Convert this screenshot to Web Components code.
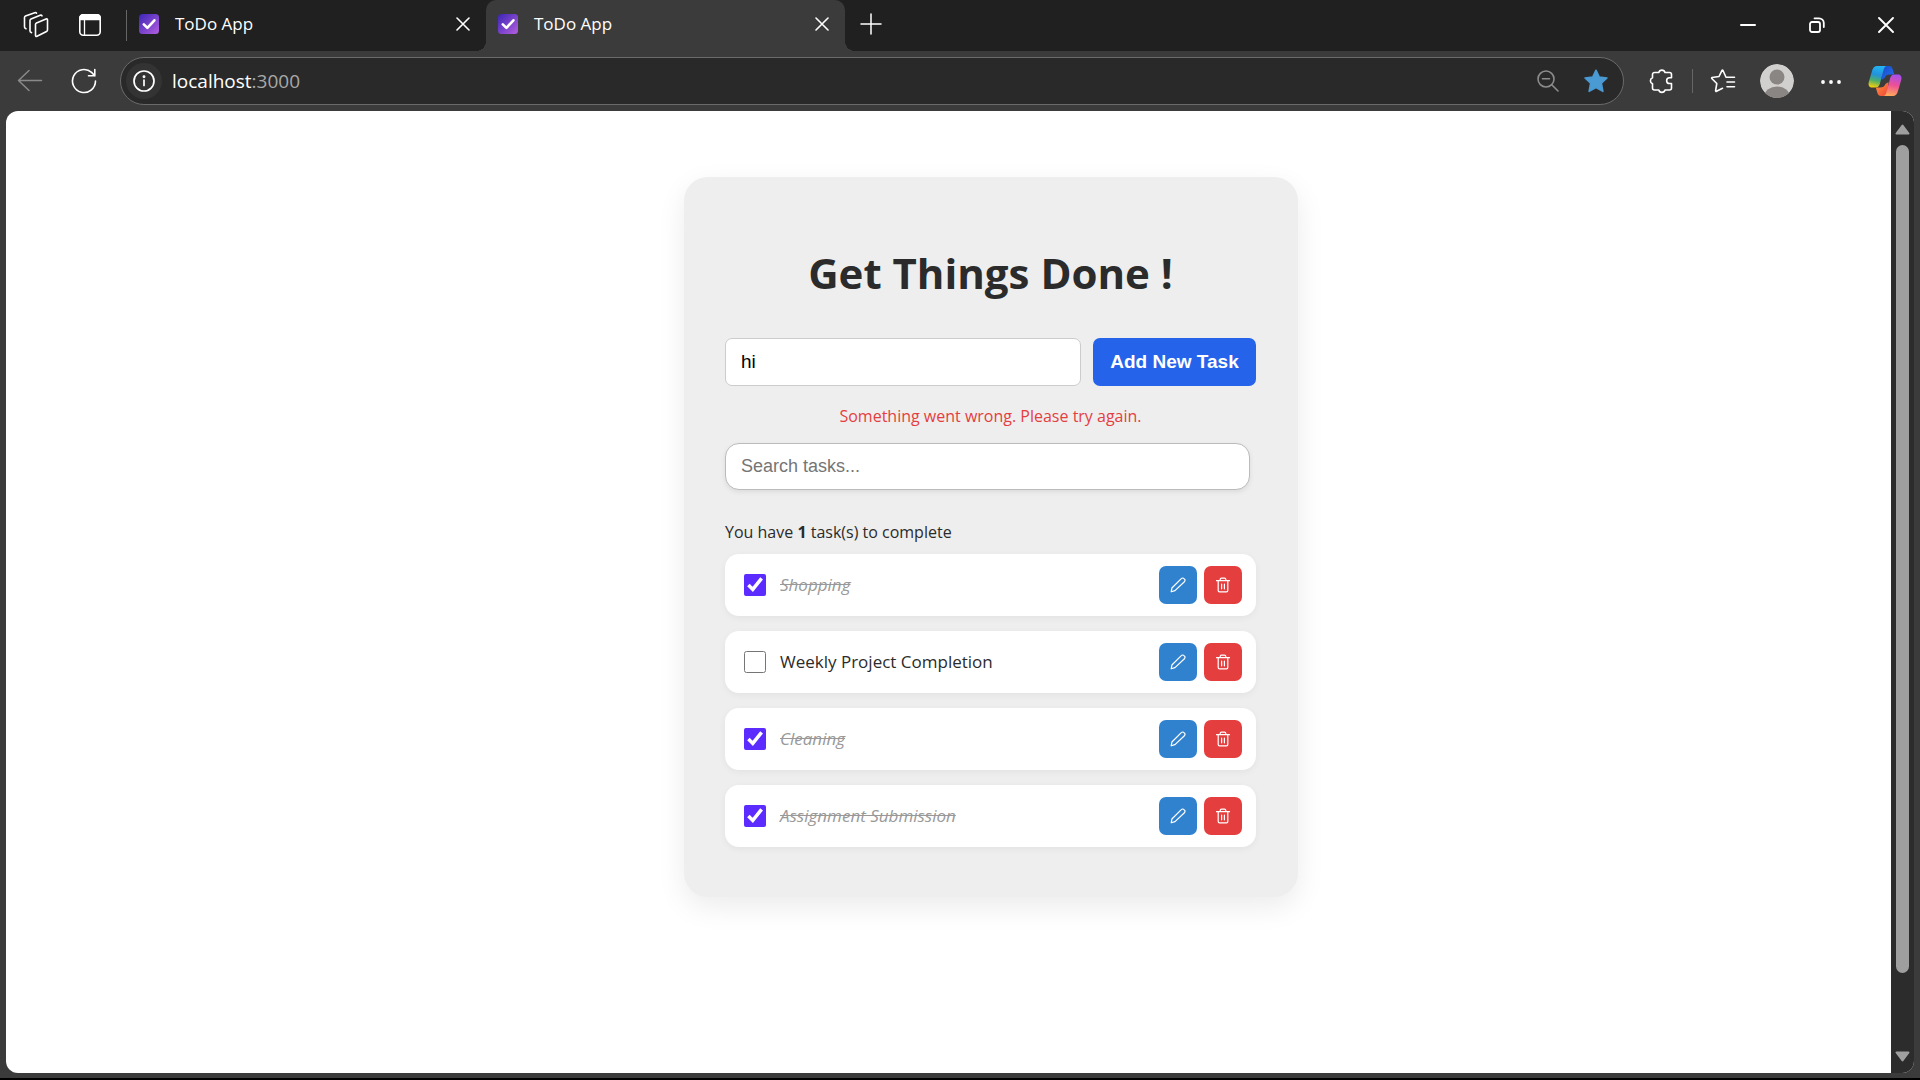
<!DOCTYPE html>
<html lang="en">
<head>
<meta charset="utf-8">
<title>ToDo App</title>
<style>
  html, body { margin: 0; height: 100%; }
  body { font-family: "Open Sans", "Noto Sans", sans-serif; background: #000; overflow: hidden; }
</style>
</head>
<body>
<browser-window>
  <browser-tab slot="tabs">ToDo App</browser-tab>
  <browser-tab slot="tabs" active>ToDo App</browser-tab>
  <address-bar slot="address" host="localhost" port=":3000"></address-bar>
  <todo-card>
    <task-item done>Shopping</task-item>
    <task-item>Weekly Project Completion</task-item>
    <task-item done>Cleaning</task-item>
    <task-item done>Assignment Submission</task-item>
  </todo-card>
</browser-window>

<script>
const reset = `
  :host, *, *::before, *::after { box-sizing: border-box; }
  button { margin: 0; padding: 0; border: 0; background: none; color: inherit; font: inherit;
           display: grid; place-items: center; cursor: pointer; }
  svg { display: block; fill: none; stroke: currentColor; stroke-linecap: round; stroke-linejoin: round; }
`;

class BaseElement extends HTMLElement {
  constructor() {
    super();
    this.attachShadow({ mode: 'open' });
  }
  connectedCallback() {
    this.shadowRoot.innerHTML = `<style>${reset}${this.styles()}</style>${this.markup()}`;
  }
}

customElements.define('browser-window', class extends BaseElement {
  styles() { return `
    :host { display: flex; flex-direction: column; height: calc(100vh - 2px); background: #3b3b3b; color: #fff; }
    .strip { display: flex; align-items: stretch; height: 51px; background: #202020; }
    .left { display: flex; align-items: center; padding-left: 9px; width: 127px; }
    .left button { width: 54px; height: 48px; padding-bottom: 2px; }
    .left i { width: 1px; height: 31px; background: #666; margin-left: auto; }
    .tabs { display: flex; flex: 0 1 718px; }
    .new { width: 52px; padding-bottom: 4px; }
    .win { display: flex; margin-left: auto; }
    .win button { width: 69px; padding-bottom: 2px; }
    .bar { display: flex; align-items: center; height: 60px; padding: 0 11px 0 6px; gap: 6px; }
    .bar button { width: 48px; height: 48px; }
    .bar i { width: 1px; height: 24px; background: #666; }
    .back { color: #8a8a8a; }
    slot[name=address]::slotted(*) { flex: 1; margin: 0 8px 0 6px; }
    .view { flex: 1; min-height: 0; display: flex; margin: 0 6px 5px; border-radius: 12px; overflow: hidden; background: #fff; }
    main { flex: 1; padding: 66px 0 0 85px; overflow: hidden; }
    .scroll { display: flex; flex-direction: column; align-items: center; justify-content: space-between; width: 23px;
              padding: 13px 0 11px; background: #2c2c2c; color: #9f9f9f; }
    .thumb { flex: 1; width: 13px; margin: 10px 0 78px; border-radius: 7px; background: #9f9f9f; }
  `; }
  markup() { return `
    <header class="strip">
      <div class="left">
        <button aria-label="Workspaces"><svg width="28" height="28" viewBox="0 0 28 28" stroke-width="1.6">
          <path d="M14.500 12L24 8q1.500-.5 1.500 1v10q0 1-1 1.500L15 25.200q-1.500.6-1.500-1V13.500q0-1 1-1.500z"/>
          <path d="M20 4.800q-.5-1-1.800-.6L9 8q-1 .5-1 1.500V20q0 1.300 1.500 1.600"/>
          <path d="M14.500 2.200q-.5-.8-1.800-.4L3.500 5q-1 .5-1 1.500V16q0 1.300 1.500 1.800"/>
        </svg></button>
        <button aria-label="Tab actions"><svg width="24" height="24" viewBox="0 0 24 24" stroke-width="1.600">
          <rect x="1.800" y="1.800" width="20.400" height="20.400" rx="3.500"/>
          <path d="M1.800 6.500V5a3.200 3.200 0 0 1 3.200-3.200h14A3.200 3.200 0 0 1 22.200 5v1.500z" fill="currentColor"/>
          <path d="M6.500 7v15" stroke-width="1.300"/>
        </svg></button>
        <i></i>
      </div>
      <div class="tabs" role="tablist"><slot name="tabs"></slot></div>
      <button class="new" aria-label="New tab"><svg width="22" height="22" viewBox="0 0 22 22" stroke-width="1.500"><path d="M11 1v20M1 11h20"/></svg></button>
      <div class="win">
        <button aria-label="Minimize"><svg width="16" height="16" viewBox="0 0 16 16" stroke-width="2" stroke-linecap="butt"><path d="M1 8h14"/></svg></button>
        <button aria-label="Restore"><svg width="16" height="16" viewBox="0 0 16 16" stroke-width="1.800"><rect x="1" y="5" width="10" height="10" rx="2"/><path d="M5.500 1.300H10A4.800 4.800 0 0 1 14.800 6v4"/></svg></button>
        <button aria-label="Close"><svg width="16" height="16" viewBox="0 0 16 16" stroke-width="1.900"><path d="M1 1l14 14M15 1L1 15"/></svg></button>
      </div>
    </header>
    <nav class="bar">
      <button class="back" aria-label="Back"><svg width="26" height="26" viewBox="0 0 26 26" stroke-width="1.500"><path d="M24.500 12.500H1.500M12 2.500L1.500 12.500 12 22.500"/></svg></button>
      <button aria-label="Refresh"><svg width="26" height="26" viewBox="0 0 26 26" stroke-width="1.600"><path d="M24.500 13A11.500 11.500 0 1 1 20.600 4.400L23.800 7.800M23.800 1.500v6.300h-6.300"/></svg></button>
      <slot name="address"></slot>
      <button aria-label="Extensions"><svg width="26" height="26" viewBox="0 0 26 26" stroke-width="1.600"><path d="M5.500 4.500h4.300a3.200 3.200 0 0 1 6.200 0h4.500a2 2 0 0 1 2 2v3.300h-2a2.700 2.700 0 0 0 0 5.700h2v4.500a2 2 0 0 1-2 2H16a3.200 3.200 0 0 1-6.200 0H5.500a2 2 0 0 1-2-2v-4.200a3.200 3.200 0 0 1 0-6V6.500a2 2 0 0 1 2-2z"/></svg></button>
      <i></i>
      <button aria-label="Favorites"><svg width="26" height="26" viewBox="0 0 26 26" stroke-width="1.600"><path d="M24.500 9.300H16L12.900 2.300a.5.500 0 0 0-.9 0L9 8.500l-6.900 1a.6.600 0 0 0-.3 1l5 5-1.200 7.200a.6.600 0 0 0 .9.600l6-3M17 14h7.500M17 18.700h7.500"/></svg></button>
      <button aria-label="Profile"><svg width="34" height="34" viewBox="0 0 34 34" stroke="none">
        <defs><clipPath id="a"><circle cx="17" cy="17" r="17"/></clipPath></defs>
        <g clip-path="url(#a)" stroke="none"><circle cx="17" cy="17" r="17" fill="#d2d0ce"/><circle cx="17" cy="13" r="7.500" fill="#8a8684"/><ellipse cx="17" cy="32" rx="12.500" ry="9.500" fill="#8a8684"/></g>
      </svg></button>
      <button aria-label="Settings and more"><svg width="20" height="6" viewBox="0 0 20 6"><g fill="#fff" stroke="none"><circle cx="2" cy="4" r="1.900"/><circle cx="10" cy="4" r="1.900"/><circle cx="18" cy="4" r="1.900"/></g></svg></button>
      <button aria-label="Copilot"><svg width="34" height="32" viewBox="0 0 34 32">
        <defs>
          <linearGradient id="b" x1=".5" y1="0" x2=".3" y2="1"><stop offset="0" stop-color="#22b4f2"/><stop offset=".4" stop-color="#2292dc"/><stop offset=".68" stop-color="#4fae68"/><stop offset="1" stop-color="#f6d00c"/></linearGradient>
          <linearGradient id="c" x1=".3" y1="1" x2=".5" y2="0"><stop offset="0" stop-color="#a44ef0"/><stop offset=".5" stop-color="#ee5095"/><stop offset="1" stop-color="#ffa85c"/></linearGradient>
          <linearGradient id="d" x1="0" y1="0" x2="1" y2="1"><stop offset="0" stop-color="#1b48c8"/><stop offset="1" stop-color="#2374ee"/></linearGradient>
          <linearGradient id="e" x1="0" y1="0" x2="1" y2="1"><stop offset="0" stop-color="#f0403a"/><stop offset="1" stop-color="#ff9a3c"/></linearGradient>
        </defs>
        <g stroke="none">
          <path d="M15 1h6c2 0 3 1 3.600 3l1.600 5.500H22c-3 0-4.500 1-5.500 3.500l-3 2z" fill="url(#d)"/>
          <path d="M9 1h10c-2 0-3 2-3.500 4L11.800 19c-.8 2.500-2 3.500-4.500 3.500H4C1 22.500 0 20 .8 17L4 6C5 2.500 6.500 1 9 1z" fill="url(#b)"/>
          <g transform="rotate(180 17 16)">
            <path d="M15 1h6c2 0 3 1 3.600 3l1.600 5.500H22c-3 0-4.500 1-5.500 3.500l-3 2z" fill="url(#e)"/>
            <path d="M9 1h10c-2 0-3 2-3.500 4L11.800 19c-.8 2.500-2 3.500-4.500 3.500H4C1 22.500 0 20 .8 17L4 6C5 2.500 6.500 1 9 1z" fill="url(#c)"/>
          </g>
        </g>
      </svg></button>
    </nav>
    <div class="view">
      <main><slot></slot></main>
      <div class="scroll" aria-hidden="true">
        <svg width="15" height="11" viewBox="0 0 15 11" stroke-width="2"><path d="M7.500 1.500L13.500 9.500H1.500z" fill="currentColor"/></svg>
        <div class="thumb"></div>
        <svg width="15" height="11" viewBox="0 0 15 11" stroke-width="2"><path d="M7.500 9.500L13.500 1.500H1.500z" fill="currentColor"/></svg>
      </div>
    </div>`; }
});

customElements.define('browser-tab', class extends BaseElement {
  styles() { return `
    :host { position: relative; flex: 1; display: flex; align-items: center; padding: 0 8px 3px 12px; font-size: 17px; line-height: 24px; }
    :host([active]) { background: #3b3b3b; border-radius: 10px 10px 0 0; }
    :host([active])::before, :host([active])::after { content: ""; position: absolute; bottom: 0; width: 10px; height: 10px; }
    :host([active])::before { right: 100%; background: radial-gradient(circle at 0 0, transparent 10px, #3b3b3b 10px); }
    :host([active])::after { left: 100%; background: radial-gradient(circle at 100% 0, transparent 10px, #3b3b3b 10px); }
    .title { flex: 1; margin-left: 16px; }
    button { width: 30px; height: 30px; }
  `; }
  markup() { return `
    <svg width="20" height="20" viewBox="0 0 20 20" aria-hidden="true">
      <defs><linearGradient id="g" x1="0" y1="0" x2="1" y2="1"><stop offset="0" stop-color="#3a25b5"/><stop offset="1" stop-color="#b55fe0"/></linearGradient></defs>
      <rect width="20" height="20" rx="3.500" fill="url(#g)" stroke="none"/>
      <path d="M4.800 10.300l3.600 3.600 7-7.600" stroke="#fff" stroke-width="2.600"/>
    </svg>
    <span class="title" role="tab"><slot></slot></span>
    <button aria-label="Close tab"><svg width="14" height="14" viewBox="0 0 14 14" stroke-width="1.600"><path d="M1 1l12 12M13 1L1 13"/></svg></button>`; }
});

customElements.define('address-bar', class extends BaseElement {
  styles() { return `
    :host { display: flex; align-items: center; height: 48px; padding: 0 3px 0 5px; border: 1px solid #6a6a6a; border-radius: 24px; background: #292929; }
    .info { width: 36px; height: 36px; border-radius: 50%; background: #333; }
    .url { flex: 1; margin-left: 10px; font-size: 19px; line-height: 28px; outline: 0; }
    .port { color: #a8a8a8; }
    .zoom, .fav { width: 48px; height: 40px; }
    .zoom { color: #8c8c8c; }
    .fav { color: #4a9ad4; }
  `; }
  markup() { return `
    <button class="info" aria-label="View site information"><svg width="22" height="22" viewBox="0 0 22 22" stroke-width="1.700"><circle cx="11" cy="11" r="10"/><path d="M11 10v5.500"/><circle cx="11" cy="6.700" r=".6" fill="currentColor"/></svg></button>
    <div class="url" role="textbox" contenteditable="true" spellcheck="false" aria-label="Address">${this.getAttribute('host')}<span class="port">${this.getAttribute('port')}</span></div>
    <button class="zoom" aria-label="Zoom out"><svg width="22" height="22" viewBox="0 0 22 22" stroke-width="1.600"><circle cx="9" cy="9" r="8"/><path d="M15 15l6 6M5.500 8.800h7"/></svg></button>
    <button class="fav" aria-label="Edit favorite"><svg width="24" height="24" viewBox="0 0 24 24" stroke-width="1.500"><path d="M12 1.200l3.300 6.800 7.700 1-5.600 5.200 1.500 8.200-6.900-3.800-6.900 3.800 1.500-8.200L1 9l7.700-1z" fill="currentColor"/></svg></button>`; }
});

customElements.define('todo-card', class extends BaseElement {
  styles() { return `
    :host { display: block; max-width: 614px; margin: 0 auto; padding: 67px 42px 50px 41px; border-radius: 24px;
            background: #eee; color: #2b2b2b; box-shadow: 0 10px 29px rgba(0, 0, 0, .08); font-size: 16px; line-height: 24px; }
    h1 { margin: 0 0 36px; font-size: 42px; line-height: 58px; font-weight: 700; text-align: center; }
    form { display: flex; gap: 12px; height: 48px; }
    input { min-width: 0; border: 1px solid #ccc; background: #fff; padding: 0 15px; outline: 0; font-family: "Liberation Sans", Arial, sans-serif; }
    .new { flex: 1; border-radius: 7px; font-size: 19px; color: #000; }
    .add { width: 163px; border-radius: 7px; background: #2563eb; color: #fff; font: 700 19px "Liberation Sans", Arial, sans-serif; }
    .error { margin: 18px 0 15px; color: #e53e3e; text-align: center; }
    .search { display: block; width: calc(100% - 6px); height: 47px; border-color: #bbb; border-radius: 14px; font-size: 18px;
              box-shadow: 0 2px 5px rgba(0, 0, 0, .08); }
    .search::placeholder { color: #757575; }
    .count { margin: 30px 0 10px; }
    .list { display: flex; flex-direction: column; gap: 15px; }
  `; }
  markup() { return `
    <h1>Get Things Done !</h1>
    <form onsubmit="return false">
      <input class="new" type="text" value="hi" aria-label="New task">
      <button class="add">Add New Task</button>
    </form>
    <p class="error" role="alert">Something went wrong. Please try again.</p>
    <input class="search" type="text" placeholder="Search tasks..." aria-label="Search tasks">
    <p class="count">You have <strong>1</strong> task(s) to complete</p>
    <div class="list" role="list"><slot></slot></div>`; }
});

customElements.define('task-item', class extends BaseElement {
  styles() { return `
    :host { display: flex; align-items: center; gap: 7px; height: 62px; padding: 0 14px 0 19px; border-radius: 14px; background: #fff;
            box-shadow: 0 2px 7px rgba(0, 0, 0, .05); font-size: 17px; line-height: 24px; }
    label { flex: 1; display: flex; align-items: center; gap: 14px; }
    input { width: 22px; height: 22px; margin: 0; accent-color: #5b2bff; }
    :host([done]) span { color: #999; font-style: italic; text-decoration: line-through; }
    button { width: 38px; height: 38px; border-radius: 7px; color: #fff; }
    .edit { background: #3182ce; }
    .delete { background: #e53e3e; }
  `; }
  markup() { return `
    <label><input type="checkbox" ${this.hasAttribute('done') ? 'checked' : ''}><span><slot></slot></span></label>
    <button class="edit" aria-label="Edit task"><svg width="16" height="16" viewBox="0 0 16 16" stroke-width="1.200"><path d="M1.200 14.800l.7-3.800L11.300 1.600a1.800 1.800 0 0 1 2.700 0l.4.400a1.800 1.800 0 0 1 0 2.700L5 13.600z"/></svg></button>
    <button class="delete" aria-label="Delete task"><svg width="16" height="16" viewBox="0 0 16 16" stroke-width="1.200"><path d="M1.500 3.700h13M3.200 3.700v9.800c0 .8.500 1.300 1.300 1.300h7c.8 0 1.300-.5 1.300-1.300V3.700M5.200 3.700V2.500c0-.8.500-1.300 1.300-1.300h3c.8 0 1.300.5 1.300 1.300v1.200M6.600 7v4.800M9.400 7v4.800"/></svg></button>`; }
});
</script>
</body>
</html>
